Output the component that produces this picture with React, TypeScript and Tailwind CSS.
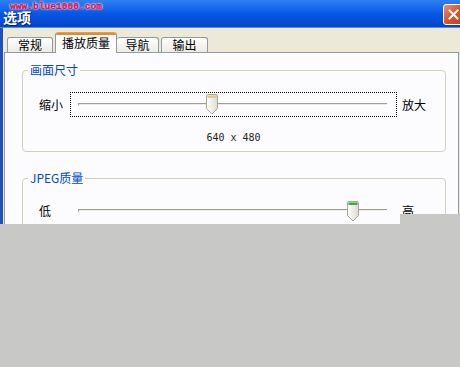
import React from 'react';

const cjk = { fontFamily: '"Noto Sans CJK SC", "Noto Sans", sans-serif' };

const Thumb = ({ cap, className }: { cap: string; className: string }) => (
  <svg width="12" height="21" viewBox="0 0 12 21" className={className}>
    <defs>
      <linearGradient id={`tg-${cap}`} x1="0" y1="0" x2="1" y2="0">
        <stop offset="0" stopColor="#ffffff" />
        <stop offset="1" stopColor="#dedbd0" />
      </linearGradient>
    </defs>
    <path
      d="M2 0.5 H10 Q11.5 0.5 11.5 2 V14.5 L6 20 L0.5 14.5 V2 Q0.5 0.5 2 0.5 Z"
      fill={`url(#tg-${cap})`}
      stroke="#a9a697"
    />
    <path d="M1.5 1.5 H10.5 V4 H1.5 Z" fill={cap} />
  </svg>
);

const Slider = ({ thumbLeft, thumbTop, cap, focused }: { thumbLeft: string; thumbTop: string; cap: string; focused?: boolean }) => (
  <div
    className={`relative ml-[7px] h-[25px] w-[327px] border ${
      focused ? 'border-dotted border-black' : 'border-transparent'
    }`}
  >
    <div className="ml-[7px] mt-[10px] h-[3px] w-[309px] border-t border-l border-[#a19f94] border-b border-b-white bg-[#eceae2]" />
    <Thumb cap={cap} className={`absolute ${thumbLeft} ${thumbTop}`} />
  </div>
);

export default function App() {
  return (
    <div className="relative h-[367px] w-[460px] overflow-hidden bg-[#c8c8c6]" style={cjk}>
      <div className="flex h-[224px] flex-col overflow-hidden">
        {/* Title bar */}
        <div className="relative flex h-[28px] shrink-0 items-center bg-linear-to-b from-[#2f80f2] via-[#0657e6] to-[#0543c6] border-b border-[#4f8fe8]">
          <span className="mt-[6px] pl-[3px] text-[14px] font-bold leading-none text-white [text-shadow:1px_1px_0_#0a246a]">
            选项
          </span>
          <span
            className="absolute left-[10px] top-[2px] text-[9.6px] font-bold leading-none text-[#d0145a] [-webkit-text-stroke:0.4px_#d0145a] [text-shadow:0_0_1px_#fff,0_0_2px_#fff,0_0_2px_#fff]"
            style={{ fontFamily: '"Liberation Mono", monospace' }}
          >
            www.blue1000.com
          </span>
          <div className="ml-auto mr-[-4px] mt-[1px] flex h-[21px] w-[21px] items-center justify-center rounded-[3px] border border-white bg-linear-to-br from-[#ec8f6f] via-[#d8532e] to-[#c23d16]">
            <svg width="11" height="11" viewBox="0 0 11 11">
              <path d="M1.5 1.5 L9.5 9.5 M9.5 1.5 L1.5 9.5" stroke="#fff" strokeWidth="2" strokeLinecap="square" />
            </svg>
          </div>
        </div>

        {/* Body */}
        <div className="flex flex-1 flex-col border-l-[3px] border-[#1f4fb8] bg-[#ece9d8] pl-[1px] pt-[4px]">
          {/* Tabs */}
          <div className="flex h-[20px] items-end pl-[3px] text-[12px] leading-none text-black">
            <div className="flex h-[15px] w-[46px] items-center justify-center rounded-t-[3px] border border-b-0 border-[#919b9c] bg-linear-to-b from-white to-[#ecebe5]">
              常规
            </div>
            <div className="relative z-10 mb-[-1px] ml-[2px] flex h-[21px] w-[62px] flex-col rounded-t-[3px] border-x border-[#919b9c] bg-[#fcfcfe]">
              <div className="h-[3px] rounded-t-[3px] bg-[#e68b2c] border-t border-[#e0a050]" />
              <div className="flex flex-1 items-center justify-center pb-[3px]">播放质量</div>
            </div>
            <div className="flex h-[15px] w-[42px] items-center justify-center rounded-t-[3px] border border-b-0 border-l-0 border-[#919b9c] bg-linear-to-b from-white to-[#ecebe5]">
              导航
            </div>
            <div className="ml-[2px] flex h-[15px] w-[47px] items-center justify-center rounded-t-[3px] border border-b-0 border-[#919b9c] bg-linear-to-b from-white to-[#ecebe5]">
              输出
            </div>
          </div>

          {/* Panel */}
          <div className="flex w-[455px] flex-1 flex-col border border-[#919b9c] bg-[#fcfcfe] pl-[17px] pt-[10px] text-[12px] text-black">
            <fieldset className="w-[424px] rounded-[4px] border border-[#d0d0bf] pb-[6px]">
              <legend className="ml-[5px] px-[2px] leading-[14px] text-[#0046d5]">画面尺寸</legend>
              <div className="mt-[15px] flex items-center pl-[16px]">
                <span className="w-[24px] leading-[14px]">缩小</span>
                <Slider thumbLeft="left-[135px]" thumbTop="top-[1px]" cap="#e3c592" focused />
                <span className="ml-[5px] leading-[14px]">放大</span>
              </div>
              <div
                className="ml-[47px] mt-[14px] w-[327px] text-center text-[10px] leading-[14px] text-[#222]"
                style={{ fontFamily: '"DejaVu Sans Mono", monospace' }}
              >
                640 x 480
              </div>
            </fieldset>

            <fieldset className="mt-[19px] w-[424px] rounded-[4px] border border-[#d0d0bf] pb-[10px]">
              <legend className="ml-[5px] px-[2px] leading-[14px] text-[#0046d5]">JPEG质量</legend>
              <div className="mt-[13px] flex items-center pl-[16px]">
                <span className="w-[24px] leading-[14px]">低</span>
                <Slider thumbLeft="left-[276px]" thumbTop="top-[2px]" cap="#3fa647" />
                <span className="ml-[5px] leading-[14px]">高</span>
              </div>
            </fieldset>
          </div>
        </div>
      </div>

      {/* cropped-off part of the screenshot */}
      <div className="absolute left-[400px] top-[214px] h-[12px] w-[60px] bg-[#c8c8c6]" />
    </div>
  );
}
